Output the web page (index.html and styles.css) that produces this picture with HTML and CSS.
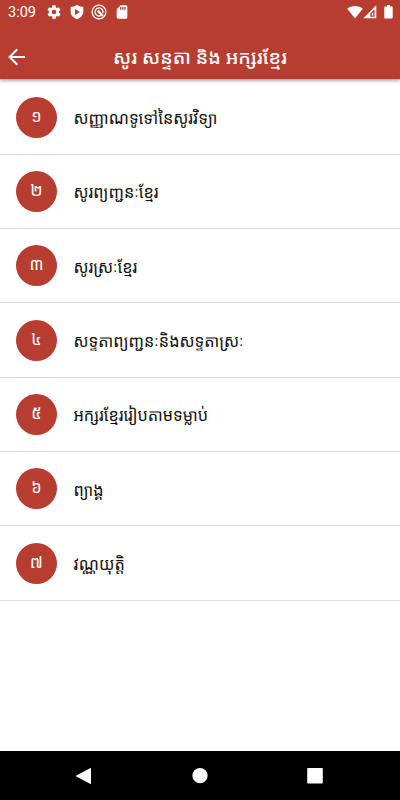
FILE: index.html
```
<!DOCTYPE html>
<html lang="km">
<head>
  <meta charset="UTF-8">
  <meta name="viewport" content="width=device-width, initial-scale=1.0">
  <title>សូរ សន្ទតា និង អក្សរខ្មែរ</title>
  <link rel="stylesheet" href="styles.css">
</head>
<body>

  <header class="header">
    <div class="status-bar">
      <span class="clock">3:09</span>
      <div class="status-left">
        <!-- settings -->
        <svg width="16" height="16" viewBox="0 0 24 24"><path fill-rule="evenodd" d="M19.4 13c0-.3.1-.6.1-1s0-.7-.1-1l2.1-1.600c.2-.2.3-.4.1-.7l-2-3.400c-.1-.2-.4-.3-.6-.2l-2.500 1c-.5-.4-1.100-.7-1.700-1l-.4-2.600c0-.3-.2-.5-.4-.5h-4c-.2 0-.4.2-.5.4l-.4 2.700c-.6.2-1.100.6-1.700 1l-2.500-1c-.2-.1-.5 0-.6.2l-2 3.400c-.1.3 0 .5.1.7L4.600 11c0 .3-.1.7-.1 1s0 .7.1 1l-2.100 1.600c-.2.2-.3.4-.1.7l2 3.400c.1.2.4.3.6.2l2.500-1c.5.4 1.100.7 1.700 1l.4 2.600c0 .3.2.5.5.5h4c.2 0 .4-.2.5-.4l.4-2.700c.6-.2 1.100-.6 1.700-1l2.500 1c.2.1.5 0 .6-.2l2-3.400c.1-.3 0-.5-.1-.7zM12 15.500a3.500 3.500 0 1 1 0-7 3.500 3.500 0 0 1 0 7z"/></svg>
        <!-- play protect -->
        <svg width="16" height="16" viewBox="0 0 24 24"><path fill-rule="evenodd" d="M12 1c3 2 5.500 3 9.500 3v8c0 5-4.500 9-9.500 11-5-2-9.500-6-9.500-11V4c4 0 6.500-1 9.500-3zM9 7.500v9l7.500-4.500z"/></svg>
        <svg width="16" height="16" viewBox="0 0 24 24" class="line"><circle cx="12" cy="12" r="10.300"/><path d="M15.500 16.800a6 6 0 1 1 2.300-3.300"/><path class="thick" d="M10 10l8 8"/></svg>
        <!-- sd card -->
        <svg width="16" height="16" viewBox="0 0 24 24"><path fill-rule="evenodd" d="M18 2h-8L4 8v12c0 1.100.9 2 2 2h12c1.100 0 2-.9 2-2V4c0-1.100-.9-2-2-2zM9 4.500h2v4H9zM12.200 4.500h2v4h-2zM15.400 4.500h2v4h-2z"/></svg>
      </div>
      <div class="status-right">
        <svg width="16" height="14" viewBox="0 0 16 14"><path d="M.2 3.800C4.500.1 11.500.1 15.800 3.800L8 13.500z"/></svg>
        <svg width="14" height="14" viewBox="0 0 14 14"><path fill-rule="evenodd" d="M13.300.3v13H.3zM11.600 4.200L7.300 8.500V11.800h4.300zM10.300 7.200v3.400H8.700V8.800z"/></svg>
        <svg class="battery" width="9" height="14" viewBox="0 0 9 14"><path d="M3 0h3v1.500h2q.7 0 .7.700v10.600q0 .7-.7.700H1q-.7 0-.7-.7V2.200q0-.7.700-.7h2z"/></svg>
      </div>
    </div>
    <div class="app-bar">
      <svg class="back" width="18" height="18" viewBox="0 0 18 18"><path d="M17 9H2M9.300 1.300L1.600 9l7.700 7.700"/></svg>
      <h1 class="title">សូរ សន្ទតា និង អក្សរខ្មែរ</h1>
    </div>
  </header>

  <main class="list">
    <div class="item"><span class="number">១</span><span class="label">សញ្ញាណទូទៅនៃសូរវិទ្យា</span></div>
    <div class="item"><span class="number">២</span><span class="label">សូរព្យញ្ជនៈខ្មែរ</span></div>
    <div class="item"><span class="number">៣</span><span class="label">សូរស្រៈខ្មែរ</span></div>
    <div class="item"><span class="number">៤</span><span class="label">សទ្ទតាព្យញ្ជនៈនិងសទ្ទតាស្រៈ</span></div>
    <div class="item"><span class="number">៥</span><span class="label">អក្សរខ្មែររៀបតាមទម្លាប់</span></div>
    <div class="item"><span class="number">៦</span><span class="label">ព្យាង្គ</span></div>
    <div class="item"><span class="number">៧</span><span class="label">វណ្ណយុត្តិ</span></div>
  </main>

  <nav class="nav-bar">
    <svg width="18" height="18" viewBox="0 0 18 18"><path d="M15 1.200v15.600q0 .5-.5.200L.3 9.500q-.8-.5 0-1L14.500 1q.5-.3.500.2z"/></svg>
    <svg width="18" height="18" viewBox="0 0 18 18"><circle cx="9" cy="8.700" r="7.600"/></svg>
    <svg width="18" height="18" viewBox="0 0 18 18"><rect x="1.200" y="1" width="15.600" height="15.600" rx="1"/></svg>
  </nav>

</body>
</html>
```
FILE: styles.css
```
body {
  margin: 0;
  height: 800px;
  display: flex;
  flex-direction: column;
  background: #ffffff;
  font-family: Roboto, "Noto Sans", "Noto Sans Khmer", sans-serif;
  overflow: hidden;
}

svg {
  display: block;
  fill: #ffffff;
}

.header {
  height: 79px;
  background: #b73d30;
  color: #ffffff;
  box-shadow: 0 1px 4px rgba(0, 0, 0, 0.5);
}

.status-bar {
  display: flex;
  align-items: center;
  height: 24px;
  padding: 0 7px 0 8px;
}

.clock {
  width: 38px;
  padding-top: 1px;
  font-size: 14.5px;
  line-height: 24px;
}

.status-left {
  display: flex;
  gap: 6.7px;
}

.line {
  fill: none;
  stroke: #ffffff;
  stroke-width: 2;
}

.thick {
  stroke-width: 3.5;
}

.status-right {
  display: flex;
  margin-left: auto;
}

.battery {
  margin-left: 7px;
}

.app-bar {
  display: flex;
  align-items: center;
  height: 55px;
  padding: 11px 8px 0;
  box-sizing: border-box;
}

.back {
  fill: none;
  stroke: #ffffff;
  stroke-width: 2;
}

.title {
  flex: 1;
  margin: 1px 18px 0 0;
  font-size: 19.4px;
  font-weight: 500;
  line-height: 30px;
  text-align: center;
}

.list {
  flex: 1;
  padding-top: 1.4px;
}

.item {
  display: flex;
  align-items: center;
  box-sizing: border-box;
  height: 74.35px;
  padding-left: 16px;
  border-bottom: 1px solid #d9d9d9;
}

.number {
  width: 41px;
  height: 41px;
  line-height: 39px;
  border-radius: 50%;
  background: #b73d30;
  color: #ffffff;
  font-size: 16.4px;
  text-align: center;
}

.label {
  margin-left: 16.5px;
  padding-top: 2px;
  color: #111111;
  font-size: 16.25px;
}

.nav-bar {
  display: flex;
  justify-content: space-between;
  align-items: center;
  height: 49px;
  padding: 0 76px;
  background: #000000;
}
```
